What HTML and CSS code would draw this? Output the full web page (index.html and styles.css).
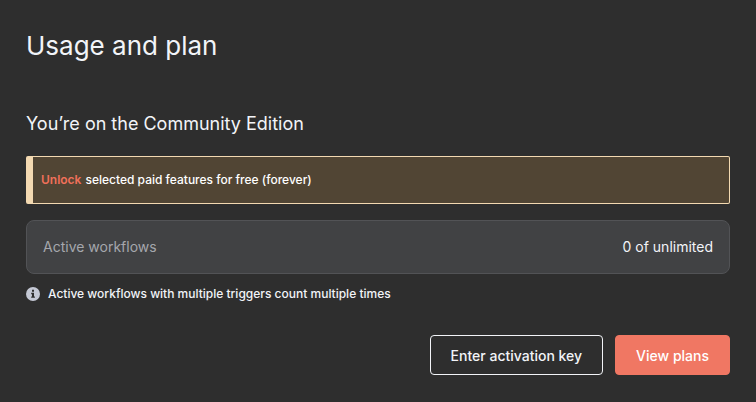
FILE: index.html
```
<!DOCTYPE html>
<html lang="en">
<head>
    <meta charset="UTF-8">
    <meta name="viewport" content="width=device-width, initial-scale=1.0">
    <title>Usage and plan</title>
    <link rel="stylesheet" href="styles.css">
</head>
<body>
    <main class="settings">
        <h1 class="title">Usage and plan</h1>
        <h2 class="edition">You’re on the Community Edition</h2>

        <div class="notice">
            <a class="notice-link" href="#">Unlock</a>
            <span>selected paid features for free (forever)</span>
        </div>

        <div class="quota">
            <span class="quota-label">Active workflows</span>
            <span class="quota-value">0 of unlimited</span>
        </div>

        <p class="info">
            <svg class="info-icon" viewBox="0 0 14 14" aria-hidden="true">
                <circle cx="7" cy="7" r="7" fill="#c4c8d4"/>
                <path d="M6 2.8h2v2H6zM5.2 5.8H8v3.6h.9v1.4H5.2V9.4H6V7.2h-.8z" fill="#2e2e2e"/>
            </svg>
            <span>Active workflows with multiple triggers count multiple times</span>
        </p>

        <div class="actions">
            <button class="button" type="button">Enter activation key</button>
            <button class="button button-primary" type="button">View plans</button>
        </div>
    </main>
</body>
</html>
```

FILE: styles.css
```
* {
    box-sizing: border-box;
}
body {
    margin: 0;
    background: #2e2e2e;
    color: #f2f4f8;
    font-family: Inter, "Liberation Sans", sans-serif;
}
.settings {
    padding: 28px 26px;
}
.title {
    margin: 0 0 48px;
    font-size: 26px;
    font-weight: 400;
    line-height: 36px;
}
.edition {
    margin: 0 0 20px;
    font-size: 18px;
    font-weight: 400;
    line-height: 24px;
}
.notice {
    display: flex;
    gap: 4px;
    margin-bottom: 16px;
    padding: 15px 8px;
    border: 1px solid #f3d9b1;
    border-left-width: 7px;
    border-radius: 2px;
    background: #514534;
    color: #fff;
    font-size: 12px;
    font-weight: 500;
    line-height: 16px;
}
.notice-link {
    color: #f0705a;
    font-weight: 600;
    text-decoration: none;
}
.quota {
    display: flex;
    justify-content: space-between;
    align-items: center;
    margin-bottom: 12px;
    padding: 16px;
    border: 1px solid #525356;
    border-radius: 8px;
    background: #414244;
    font-size: 14px;
    line-height: 20px;
}
.quota-label {
    color: #a5a7ad;
}
.info {
    display: flex;
    align-items: center;
    gap: 8px;
    margin: 0 0 33px;
    font-size: 12px;
    font-weight: 500;
    line-height: 16px;
}
.info-icon {
    width: 14px;
    height: 14px;
}
.actions {
    display: flex;
    justify-content: flex-end;
    gap: 12px;
}
.button {
    height: 40px;
    padding: 0 20px;
    border: 1px solid #f2f4f8;
    border-radius: 4px;
    background: transparent;
    color: #f2f4f8;
    font-family: inherit;
    font-size: 14px;
    font-weight: 500;
    cursor: pointer;
}
.button-primary {
    border-color: #f07763;
    background: #f07763;
    color: #fff;
}
```
